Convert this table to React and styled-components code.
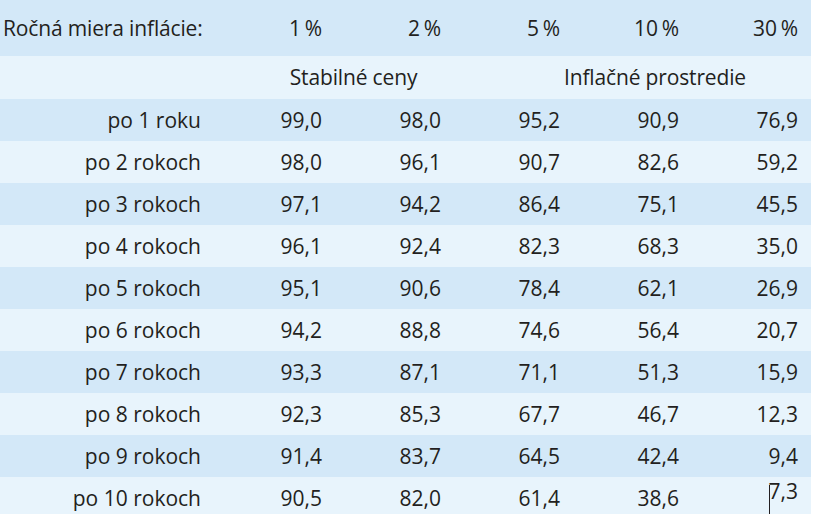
import React from 'react';
import styled, { createGlobalStyle } from 'styled-components';

const GlobalStyle = createGlobalStyle`
    html, body {
        margin: 0;
        padding: 0;
        background: #ffffff;
    }
    body {
        font-family: "Open Sans", "Noto Sans", sans-serif;
        color: #231f20;
    }
`

const DARK = '#d3e8f8';
const LIGHT = '#e8f4fc';

const rates = ['1', '2', '5', '10', '30'];

const data = [
    ['po 1 roku', '99,0', '98,0', '95,2', '90,9', '76,9'],
    ['po 2 rokoch', '98,0', '96,1', '90,7', '82,6', '59,2'],
    ['po 3 rokoch', '97,1', '94,2', '86,4', '75,1', '45,5'],
    ['po 4 rokoch', '96,1', '92,4', '82,3', '68,3', '35,0'],
    ['po 5 rokoch', '95,1', '90,6', '78,4', '62,1', '26,9'],
    ['po 6 rokoch', '94,2', '88,8', '74,6', '56,4', '20,7'],
    ['po 7 rokoch', '93,3', '87,1', '71,1', '51,3', '15,9'],
    ['po 8 rokoch', '92,3', '85,3', '67,7', '46,7', '12,3'],
    ['po 9 rokoch', '91,4', '83,7', '64,5', '42,4', '9,4'],
    ['po 10 rokoch', '90,5', '82,0', '61,4', '38,6', '7,3'],
];

export default function App() {
    return (
        <>
            <GlobalStyle />
            <Table>
                <Row $bg={DARK} $height={56}>
                    <HeadLabel>Ročná miera inflácie:</HeadLabel>
                    {rates.map((r) => (
                        <Cell key={r}>{r}{'\u2009'}%</Cell>
                    ))}
                </Row>

                <Row $bg={LIGHT} $height={43}>
                    <span />
                    <Group $span={2} $padLeft={50}>Stabilné ceny</Group>
                    <Group $span={3} $padLeft={58}>Inflačné prostredie</Group>
                </Row>

                {data.map(([label, ...values], i) => (
                    <Row key={label} $bg={i % 2 === 0 ? DARK : LIGHT} $height={42}>
                        <Label>{label}</Label>
                        {values.map((v, j) => (
                            <Cell key={j}>
                                {/* caret left in the last cell of the screenshot */}
                                {i === data.length - 1 && j === values.length - 1 ? <Caret /> : null}
                                {v}
                            </Cell>
                        ))}
                    </Row>
                ))}
            </Table>
        </>
    )
}

const Table = styled.div`
    width: 811px;
    display: flex;
    flex-direction: column;
    font-size: 21px;
    line-height: 1;
    overflow: hidden;
`

const Row = styled.div`
    display: grid;
    grid-template-columns: 216px repeat(5, 119px);
    align-items: center;
    height: ${(p) => p.$height}px;
    background: ${(p) => p.$bg};
    flex-shrink: 0;
`

const HeadLabel = styled.div`
    padding-left: 3px;
    letter-spacing: -0.15px;
    white-space: nowrap;
`

const Label = styled.div`
    text-align: right;
    padding-right: 15px;
    white-space: nowrap;
`

const Cell = styled.div`
    text-align: right;
    padding-right: 13px;
    white-space: nowrap;
`

const Group = styled.div`
    grid-column: span ${(p) => p.$span};
    text-align: center;
    padding-left: ${(p) => p.$padLeft}px;
    padding-right: 13px;
    letter-spacing: -0.15px;
    white-space: nowrap;
`

const Caret = styled.span`
    display: inline-block;
    width: 1px;
    height: 30px;
    margin-right: -1px;
    background: #231f20;
    vertical-align: -16px;
`
